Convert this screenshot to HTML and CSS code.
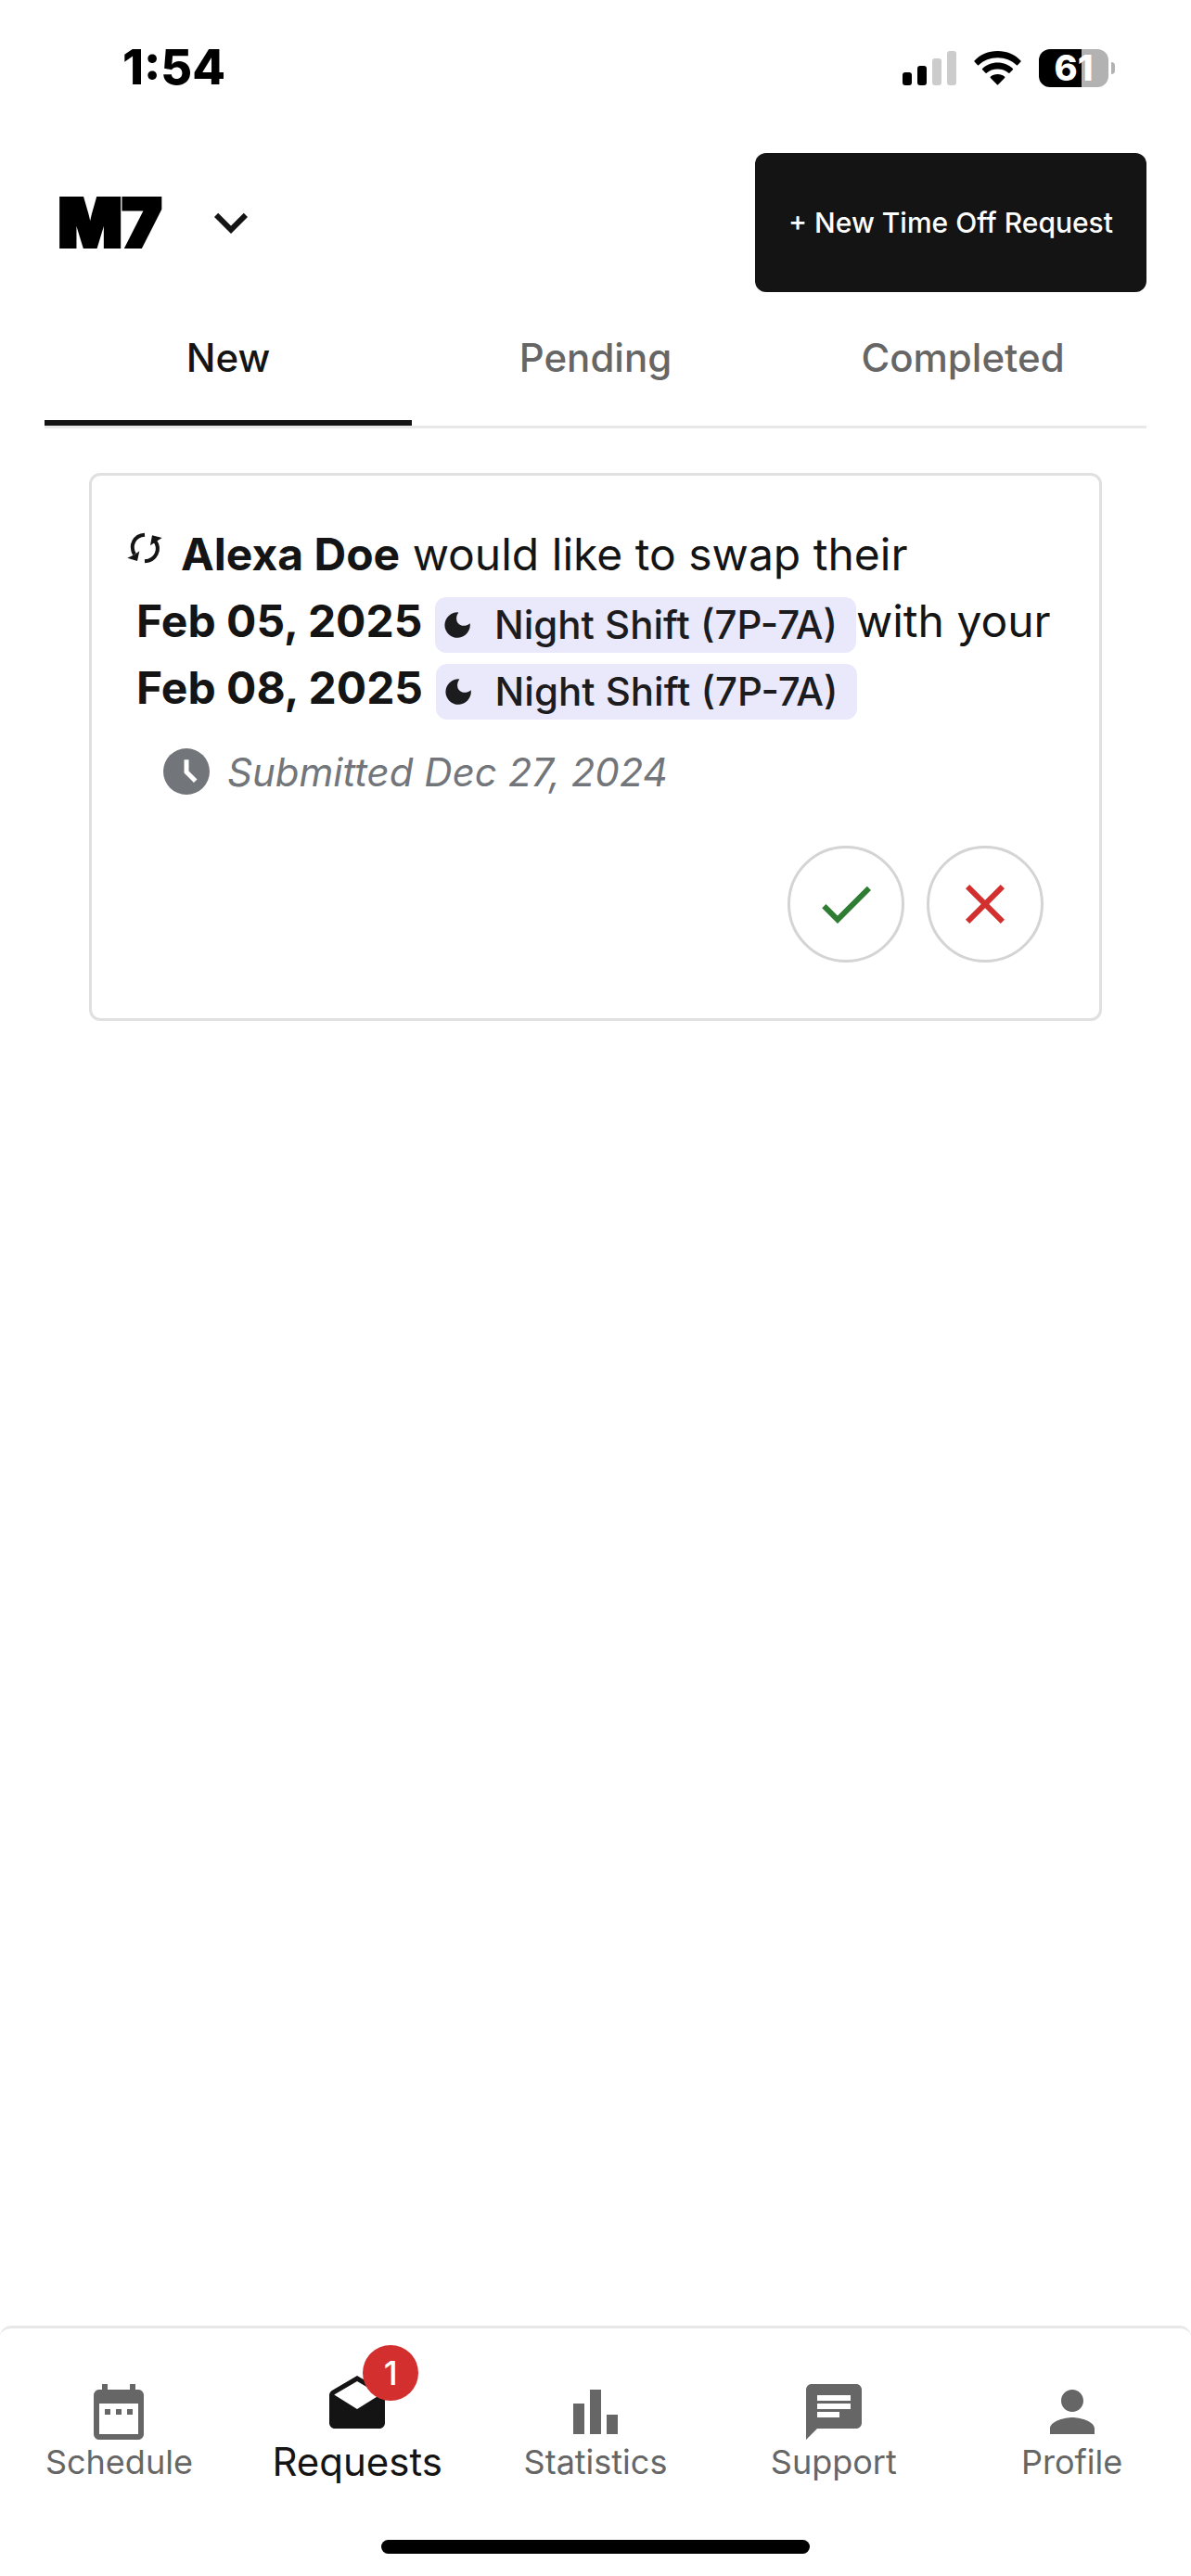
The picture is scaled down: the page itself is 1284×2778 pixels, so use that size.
FILE: index.html
```html
<!DOCTYPE html>
<html lang="en">
<head>
    <meta charset="UTF-8">
    <meta name="viewport" content="width=device-width, initial-scale=1.0">
    <title>Requests</title>
    <link rel="stylesheet" href="styles.css">
</head>
<body>
    <div class="status-bar">
        <span class="time">1:54</span>
        <div class="status-icons">
            <svg class="signal" viewBox="0 0 58 37">
                <rect x="0" y="23" width="10" height="14" rx="3"/>
                <rect x="16" y="16" width="10" height="21" rx="3"/>
                <rect class="dim" x="32" y="8" width="10" height="29" rx="3"/>
                <rect class="dim" x="48" y="0" width="10" height="37" rx="3"/>
            </svg>
            <svg class="wifi" viewBox="0 0 51 37">
                <path d="M25.5 0C35.5 0 44.5 4 50.5 10.5Q51 11 50.5 11.6L47 15.2Q46.5 15.6 46 15.2C40.5 10 33.5 7.2 25.5 7.2S10.5 10 5 15.2Q4.5 15.6 4 15.2L.5 11.6Q0 11 .5 10.5C6.5 4 15.5 0 25.5 0z"/>
                <path d="M25.5 12.5C32 12.5 37.7 15 41.9 19Q42.5 19.5 42 20.1L38.4 23.7Q37.9 24.2 37.4 23.7C34.2 20.9 30.2 19.4 25.5 19.4S16.8 20.9 13.6 23.7Q13.1 24.2 12.6 23.7L9 20.1Q8.5 19.5 9.1 19C13.3 15 19 12.5 25.5 12.5z"/>
                <path d="M25.5 25C28.5 25 31.2 26 33.2 27.8Q33.7 28.3 33.2 28.9L26.1 36.3Q25.5 36.9 24.9 36.3L17.8 28.9Q17.3 28.3 17.8 27.8C19.8 26 22.5 25 25.5 25z"/>
            </svg>
            <div class="battery"><span>61</span></div>
        </div>
    </div>

    <header class="header">
        <button class="team" type="button">
            <span class="logo">M7</span>
            <svg class="icon" viewBox="0 0 24 24"><path d="M16.59 8.59 12 13.17 7.41 8.59 6 10l6 6 6-6z"/></svg>
        </button>
        <button class="new-request" type="button">+ New Time Off Request</button>
    </header>

    <div class="tabs" role="tablist">
        <button class="tab active" type="button" role="tab" aria-selected="true">New</button>
        <button class="tab" type="button" role="tab" aria-selected="false">Pending</button>
        <button class="tab" type="button" role="tab" aria-selected="false">Completed</button>
    </div>

    <main>
        <div class="card">
            <p class="message">
                <svg class="swap" viewBox="0 0 42 42">
                    <path class="arc" d="M21 6.7C10 7.5 4.5 17.5 10 28M21 35.3C33 34.5 39 22.5 31.7 12.7"/>
                    <path d="M2.3 31.7 13 35l2.3-10.7-5 3.7zM29 7.3l10.7 2.7-5.5 3.5-7.2 4.8z"/>
                </svg><strong>Alexa Doe</strong> would like to swap their
                <strong>Feb 05, 2025</strong>
                <span class="chip"><svg class="moon" viewBox="0 0 28 28"><path d="M15.3.4A13.7 13.7 0 1 0 27.7 12.3C23 16 17.5 15.5 14.8 12 12 8.500 13 3.500 15.3.4z"/></svg>Night Shift (7P-7A)</span>with your
                <strong>Feb 08, 2025</strong>
                <span class="chip"><svg class="moon" viewBox="0 0 28 28"><path d="M15.3.4A13.7 13.7 0 1 0 27.7 12.3C23 16 17.5 15.5 14.8 12 12 8.500 13 3.500 15.3.4z"/></svg>Night Shift (7P-7A)</span>
            </p>
            <div class="submitted">
                <svg class="clock" viewBox="0 0 24 24">
                    <circle cx="12" cy="12" r="10"/>
                    <path d="M12 6.9v5.3l3.9 3.9"/>
                </svg>
                <em>Submitted Dec 27, 2024</em>
            </div>
            <div class="actions">
                <button class="round accept" type="button" aria-label="Accept">
                    <svg class="icon" viewBox="0 0 24 24"><path d="M9 16.17 4.83 12l-1.42 1.41L9 19 21 7l-1.41-1.41z"/></svg>
                </button>
                <button class="round decline" type="button" aria-label="Decline">
                    <svg class="icon" viewBox="0 0 24 24"><path d="M19 6.41 17.59 5 12 10.59 6.41 5 5 6.41 10.59 12 5 17.59 6.41 19 12 13.41 17.59 19 19 17.59 13.41 12z"/></svg>
                </button>
            </div>
        </div>
    </main>

    <nav class="bottom-nav">
        <div class="nav-items">
            <a class="nav-item" href="#schedule">
                <svg class="icon" viewBox="0 0 24 24"><path d="M9 11H7v2h2v-2zm4 0h-2v2h2v-2zm4 0h-2v2h2v-2zm2-7h-1V2h-2v2H8V2H6v2H5c-1.11 0-1.99.9-1.99 2L3 20c0 1.1.89 2 2 2h14c1.1 0 2-.9 2-2V6c0-1.1-.9-2-2-2zm0 16H5V9h14v11z"/></svg>
                <span>Schedule</span>
            </a>
            <a class="nav-item active" href="#requests">
                <div class="icon-wrap">
                    <svg class="icon" viewBox="0 0 24 24"><path d="M21.99 8c0-.72-.37-1.35-.94-1.7L12 1 2.95 6.3C2.38 6.65 2 7.28 2 8v10c0 1.1.9 2 2 2h16c1.1 0 2-.9 2-2l-.01-10zM12 13 3.74 7.84 12 3l8.26 4.84L12 13z"/></svg>
                    <b class="badge">1</b>
                </div>
                <span>Requests</span>
            </a>
            <a class="nav-item" href="#statistics">
                <svg class="icon" viewBox="0 0 24 24"><path d="M4 9h4v11H4zm12 4h4v7h-4zm-6-9h4v16h-4z"/></svg>
                <span>Statistics</span>
            </a>
            <a class="nav-item" href="#support">
                <svg class="icon" viewBox="0 0 24 24"><path d="M20 2H4c-1.1 0-1.99.9-1.99 2L2 22l4-4h14c1.1 0 2-.9 2-2V4c0-1.1-.9-2-2-2zM6 9h12v2H6V9zm8 5H6v-2h8v2zm4-6H6V6h12v2z"/></svg>
                <span>Support</span>
            </a>
            <a class="nav-item" href="#profile">
                <svg class="icon" viewBox="0 0 24 24"><path d="M12 12c2.21 0 4-1.79 4-4s-1.79-4-4-4-4 1.79-4 4 1.79 4 4 4zm0 2c-2.67 0-8 1.34-8 4v2h16v-2c0-2.66-5.33-4-8-4z"/></svg>
                <span>Profile</span>
            </a>
        </div>
        <div class="home-indicator"></div>
    </nav>
</body>
</html>
```
FILE: styles.css
```css
* {
    box-sizing: border-box;
}

body {
    margin: 0;
    min-height: 100vh;
    display: flex;
    flex-direction: column;
    font-family: Inter, "Liberation Sans", sans-serif;
    background-color: #fff;
    color: #141414;
}

button {
    font-family: inherit;
    color: inherit;
    background: none;
    border: none;
    padding: 0;
    cursor: pointer;
}

svg {
    fill: currentColor;
}

.icon {
    display: block;
    width: 72px;
    height: 72px;
}

/* status bar */
.status-bar {
    display: flex;
    justify-content: space-between;
    align-items: center;
    padding: 45px 82px 64px 132px;
    color: #000;
}

.time {
    font-size: 52px;
    font-weight: 800;
    line-height: 56px;
}

.status-icons {
    display: flex;
    align-items: center;
    gap: 19px;
}

.signal {
    width: 58px;
    height: 37px;
}

.signal .dim {
    fill: #ccc;
}

.wifi {
    width: 51px;
    height: 37px;
}

.battery {
    position: relative;
    width: 75px;
    height: 41px;
    margin-right: 7px;
    border-radius: 12px;
    background: linear-gradient(to right, #000 62%, #b2b2b2 62%);
    color: #fff;
    font-size: 38px;
    font-weight: 800;
    line-height: 41px;
    text-align: center;
}

.battery::after {
    content: "";
    position: absolute;
    top: 14px;
    right: -7px;
    width: 4px;
    height: 13px;
    border-radius: 0 4px 4px 0;
    background-color: #b2b2b2;
}

/* header */
.header {
    display: flex;
    justify-content: space-between;
    align-items: center;
    padding: 0 48px;
}

.team {
    display: flex;
    align-items: center;
    gap: 24px;
}

.logo {
    min-width: 141px;
    color: #000;
    font-size: 72px;
    font-weight: 900;
    line-height: 72px;
    -webkit-text-stroke: 4px #000;
}

.new-request {
    height: 150px;
    padding: 0 36px;
    border-radius: 12px;
    background-color: #141414;
    color: #fff;
    font-size: 30px;
    font-weight: 500;
}

/* tabs */
.tabs {
    display: flex;
    margin: 0 48px;
    border-bottom: 3px solid #e8e8e8;
}

.tab {
    flex: 1;
    height: 144px;
    padding-top: 3px;
    border-bottom: 6px solid transparent;
    color: #666;
    font-size: 42px;
    font-weight: 500;
}

.tab.active {
    color: #141414;
    border-bottom-color: #141414;
}

/* request card */
main {
    flex: 1;
    padding: 48px 96px;
}

.card {
    padding: 49px 36px 60px;
    border: 3px solid #e0e0e0;
    border-radius: 12px;
}

.message {
    margin: 0;
    padding-left: 12px;
    font-size: 48px;
    line-height: 72px;
}

.message strong {
    font-weight: 700;
    white-space: nowrap;
}

.swap {
    width: 42px;
    height: 42px;
    margin: 0 18px 0 -12px;
    vertical-align: 3px;
}

.swap .arc {
    fill: none;
    stroke: currentColor;
    stroke-width: 4;
}

.chip {
    display: inline-flex;
    align-items: center;
    height: 60px;
    padding: 0 20px 0 10px;
    border-radius: 12px;
    background-color: #eae8fb;
    color: #1c1c1e;
    font-size: 42px;
    font-weight: 500;
    vertical-align: middle;
    white-space: nowrap;
}

.moon {
    width: 28px;
    height: 28px;
    margin-right: 26px;
}

.submitted {
    display: flex;
    align-items: center;
    gap: 14px;
    margin: 24px 24px 50px 36px;
    color: #72757a;
    font-size: 42px;
}

.clock {
    width: 60px;
    height: 60px;
}

.clock path {
    fill: none;
    stroke: #fff;
    stroke-width: 2;
}

.actions {
    display: flex;
    justify-content: flex-end;
    gap: 24px;
    margin-right: 24px;
}

.round {
    width: 126px;
    height: 126px;
    padding: 24px;
    border: 3px solid #d4d4d4;
    border-radius: 50%;
}

.accept {
    color: #2e7d32;
}

.decline {
    color: #d32f2f;
}

/* bottom navigation */
.bottom-nav {
    padding-bottom: 24px;
    border-top: 3px solid #e8e8e8;
    border-radius: 12px;
}

.nav-items {
    display: flex;
    height: 216px;
    margin-bottom: 12px;
}

.nav-item {
    flex: 1;
    display: flex;
    flex-direction: column;
    align-items: center;
    justify-content: center;
    color: #666;
    font-size: 36px;
    line-height: 36px;
    text-decoration: none;
}

.nav-item.active {
    color: #141414;
    font-size: 42px;
    line-height: 48px;
}

.icon-wrap {
    position: relative;
}

.badge {
    position: absolute;
    top: -30px;
    right: -30px;
    width: 60px;
    border-radius: 50%;
    background-color: #d32f2f;
    color: #fff;
    font-size: 36px;
    font-weight: 500;
    line-height: 60px;
    text-align: center;
}

.home-indicator {
    width: 36%;
    height: 15px;
    margin: 0 auto;
    border-radius: 8px;
    background-color: #000;
}
```
